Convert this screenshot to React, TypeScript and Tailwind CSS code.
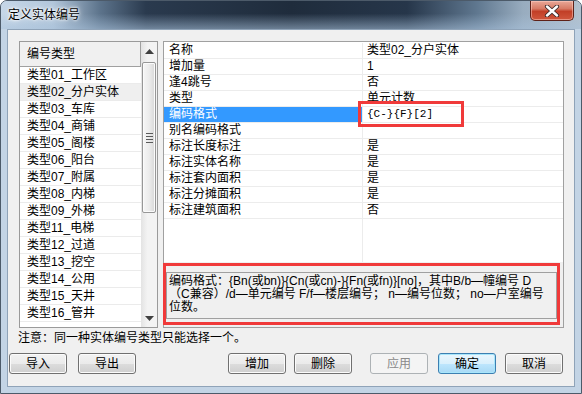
const listItems = [
  "类型01_工作区",
  "类型02_分户实体",
  "类型03_车库",
  "类型04_商铺",
  "类型05_阁楼",
  "类型06_阳台",
  "类型07_附属",
  "类型08_内梯",
  "类型09_外梯",
  "类型11_电梯",
  "类型12_过道",
  "类型13_挖空",
  "类型14_公用",
  "类型15_天井",
  "类型16_管井",
];

const propRows: [string, string][] = [
  ["名称", "类型02_分户实体"],
  ["增加量", "1"],
  ["逢4跳号", "否"],
  ["类型", "单元计数"],
  ["编码格式", "{C-}{F}[2]"],
  ["别名编码格式", ""],
  ["标注长度标注", "是"],
  ["标注实体名称", "是"],
  ["标注套内面积", "是"],
  ["标注分摊面积", "是"],
  ["标注建筑面积", "否"],
];

const Btn = ({ label, kind = "normal", className = "" }: { label: string; kind?: "normal" | "primary" | "disabled"; className?: string }) => {
  const look =
    kind === "disabled"
      ? "border-[#adb2b5] bg-[#f4f4f4] text-[#8a8a8a]"
      : kind === "primary"
      ? "border-[#3c7fb1] bg-[linear-gradient(180deg,#eaf6fd_0%,#d9f0fc_50%,#bee6fd_51%,#a7d9f5_100%)] shadow-[inset_0_0_0_1px_#a8e6fb] text-black"
      : "border-[#707070] bg-[linear-gradient(180deg,#f2f2f2_0%,#ebebeb_50%,#dddddd_51%,#cfcfcf_100%)] shadow-[inset_0_0_0_1px_#fbfbfb] text-black";
  return (
    <div className={`w-[58px] h-[21px] rounded-[3px] border flex items-center justify-center leading-none ${look} ${className}`}>
      {label}
    </div>
  );
};

const Arrow = ({ up }: { up?: boolean }) => (
  <svg width="9" height="5" viewBox="0 0 9 5">
    <polygon points={up ? "4.5,0 9,5 0,5" : "0,0 9,0 4.5,5"} fill="#404040" />
  </svg>
);

export default function App() {
  return (
    <div className="w-[582px] h-[394px] flex flex-col overflow-hidden rounded-t-[7px] border border-[#4c5a69] bg-[#c3d4e5] text-[12px] text-black font-['Liberation_Sans','Noto_Sans_CJK_SC',sans-serif]">
      {/* title bar */}
      <div className="h-[28px] flex items-start justify-between bg-[image:linear-gradient(180deg,rgba(255,255,255,0)_45%,rgba(170,195,220,0.55)_100%),linear-gradient(90deg,#c6d7e8_0%,#b2c6da_9%,#5d748c_17%,#2a3a4e_25%,#1f2c3c_50%,#26364a_70%,#5f778f_82%,#98acbf_90%,#b3c1ce_100%)]">
        <div className="pl-[7px] pt-[6px] leading-[16px] [text-shadow:0_0_6px_#fff,0_0_3px_#fff,0_0_2px_#fff]">
          定义实体编号
        </div>
        <div className="mr-[7px] w-[44px] h-[20px] rounded-b-[5px] border border-t-0 border-[#5e2118] bg-[linear-gradient(180deg,#e9a898_0%,#d77b66_40%,#c23f27_55%,#d0573d_100%)] shadow-[inset_0_0_0_1px_rgba(255,210,200,0.5)] flex items-center justify-center">
          <svg width="16" height="12" viewBox="0 0 16 12">
            <path d="M3 1.5 L13 10.5 M13 1.5 L3 10.5" stroke="#3a2a2a" strokeWidth="4.2" strokeLinecap="round" />
            <path d="M3 1.5 L13 10.5 M13 1.5 L3 10.5" stroke="#ffffff" strokeWidth="2.4" strokeLinecap="round" />
          </svg>
        </div>
      </div>

      {/* client area */}
      <div className="mx-[6px] h-[358px] border border-[#8fa3b8] bg-[#f0f0f0] flex flex-col">
        <div className="flex gap-[5px] pl-[11px] pt-[11px]">
          {/* type list */}
          <div className="w-[139px] h-[287px] border border-[#9a9a9a] bg-white flex">
            <div className="w-[121px] flex flex-col">
              <div className="h-[25px] bg-[#f0f0f0] border-b border-r border-[#a0a0a0] pl-[7px] leading-[24px]">编号类型</div>
              {listItems.map((it, i) => (
                <div
                  key={it}
                  className={`h-[17px] border-b border-[#ebebeb] pl-[7px] leading-[16px] whitespace-nowrap ${i === 1 ? "bg-[#efefef]" : ""}`}
                >
                  {it}
                </div>
              ))}
            </div>
            <div className="w-[16px] flex flex-col bg-[linear-gradient(90deg,#e3e3e3_0%,#f3f3f3_40%,#f3f3f3_100%)]">
              <div className="h-[18px] flex items-center justify-center">
                <Arrow up />
              </div>
              <div className="mt-[2px] mx-[1px] h-[151px] rounded-[2px] border border-[#979797] bg-[linear-gradient(90deg,#f6f6f6_0%,#ececec_50%,#d8d8d8_100%)] shadow-[inset_0_0_0_1px_#fbfbfb] flex flex-col items-center justify-center gap-[2px]">
                <div className="w-[7px] h-px bg-[#5a5a5a]" />
                <div className="w-[7px] h-px bg-[#5a5a5a]" />
                <div className="w-[7px] h-px bg-[#5a5a5a]" />
                <div className="w-[7px] h-px bg-[#5a5a5a]" />
              </div>
              <div className="flex-1" />
              <div className="h-[17px] flex items-center justify-center">
                <Arrow />
              </div>
            </div>
          </div>

          {/* property panel */}
          <div className="relative w-[401px] h-[287px] border border-[#a0a0a0] flex flex-col">
            <div className="h-[220px] bg-white flex flex-col pt-px">
              {propRows.map(([k, v], i) => (
                <div key={k} className="h-[16px] flex border-b border-[#ececec] leading-[15px]">
                  <div
                    className={`w-[199px] pl-[5px] border-r border-[#ececec] ${i === 4 ? "bg-[#3399ff] text-white" : ""}`}
                  >
                    {k}
                  </div>
                  <div className={`flex-1 pl-[4px] whitespace-nowrap ${i === 4 ? "font-['Liberation_Mono','Noto_Sans_CJK_SC',monospace] text-[11px]" : ""}`}>
                    {v}
                  </div>
                </div>
              ))}
              <div className="flex-1 flex">
                <div className="w-[199px] border-r border-[#ececec]" />
              </div>
            </div>
            <div className="flex-1 bg-[#f0f0f0] pl-[2px] pt-[10px]">
              <div className="w-[391px] h-[47px] border border-[#a0a0a0] bg-[#f0f0f0] pl-[2px] pt-[2px] leading-[13px] whitespace-nowrap">
                <div>编码格式：{"{Bn(或bn)}{Cn(或cn)-}{Fn(或fn)}[no]"}，其中B/b—幢编号 D</div>
                <div>（C兼容）/d—单元编号 F/f—楼层编号； n—编号位数； no—户室编号</div>
                <div>位数。</div>
              </div>
            </div>
            {/* annotation rectangles */}
            <div className="absolute left-[194px] top-[59px] w-[106px] h-[26px] border-[3px] border-[#f03a3a]" />
            <div className="absolute left-[-1px] top-[221px] w-[397px] h-[62px] border-[3px] border-[#f03a3a]" />
          </div>
        </div>

        <div className="pl-[10px] h-[20px] leading-[20px]">注意：同一种实体编号类型只能选择一个。</div>

        <div className="mt-[5px] pl-px flex">
          <Btn label="导入" />
          <Btn label="导出" className="ml-[11px]" />
          <Btn label="增加" className="ml-[92px]" />
          <Btn label="删除" className="ml-[8px]" />
          <Btn label="应用" kind="disabled" className="ml-[18px]" />
          <Btn label="确定" kind="primary" className="ml-[10px]" />
          <Btn label="取消" className="ml-[9px]" />
        </div>
      </div>
    </div>
  );
}
